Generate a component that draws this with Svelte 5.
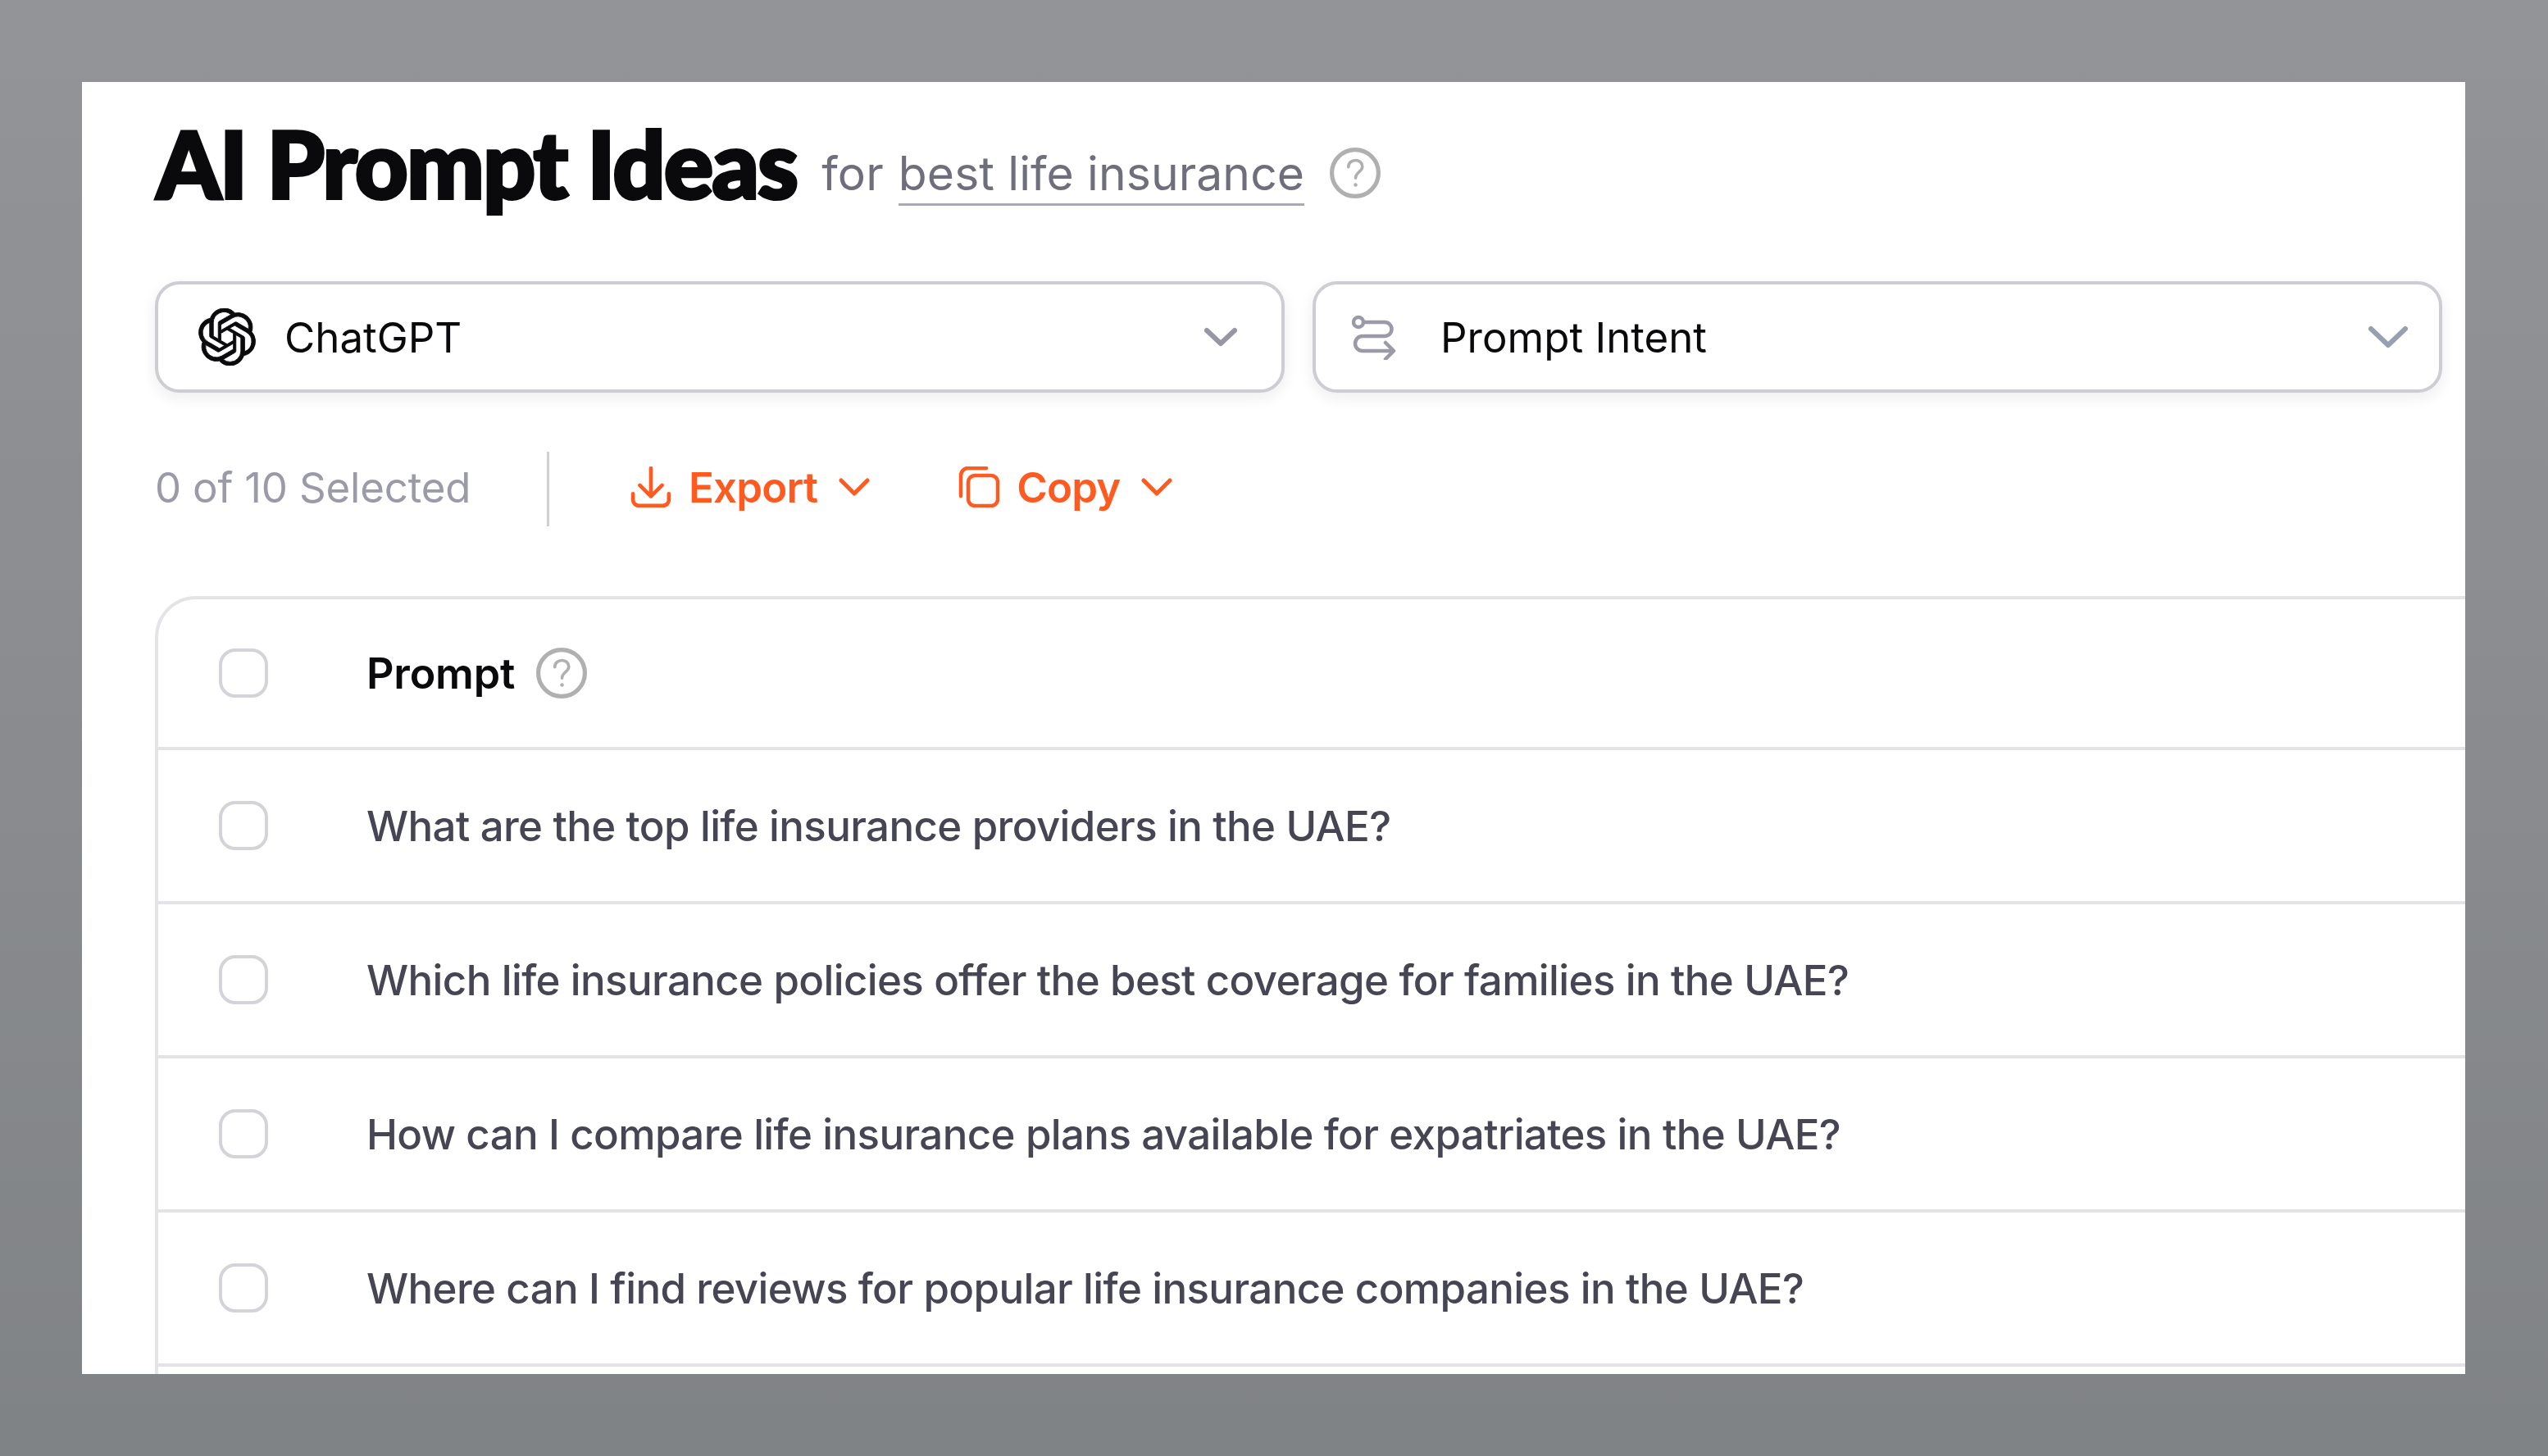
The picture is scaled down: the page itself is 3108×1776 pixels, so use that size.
<script>
    const prompts = [
        'What are the top life insurance providers in the UAE?',
        'Which life insurance policies offer the best coverage for families in the UAE?',
        'How can I compare life insurance plans available for expatriates in the UAE?',
        'Where can I find reviews for popular life insurance companies in the UAE?'
    ];
</script>

<div class="page">
    <main class="panel">
        <header class="title-row">
            <h1>AI Prompt Ideas</h1>
            <span class="for">for <span class="keyword">best life insurance</span></span>
            <svg class="help title-help" viewBox="0 0 60 60" fill="none">
                <circle cx="30" cy="30" r="27.500" />
                <path d="M22 23c0-5 4-8 8.500-8s8 3 8 7.500c0 6-8 6.500-8 13.500" />
                <circle class="dot" cx="30.500" cy="44" r="1.500" />
            </svg>
        </header>

        <div class="selects">
            <button class="select">
                <svg class="logo" viewBox="0 0 24 24" fill="#0b0b0e">
                    <path d="M22.2819 9.8211a5.9847 5.9847 0 0 0-.5157-4.9108 6.0462 6.0462 0 0 0-6.5098-2.9A6.0651 6.0651 0 0 0 4.9807 4.1818a5.9847 5.9847 0 0 0-3.9977 2.9 6.0462 6.0462 0 0 0 .7427 7.0966 5.98 5.98 0 0 0 .511 4.9107 6.051 6.051 0 0 0 6.5146 2.9001A5.9847 5.9847 0 0 0 13.2599 24a6.0557 6.0557 0 0 0 5.7718-4.2058 5.9894 5.9894 0 0 0 3.9977-2.9001 6.0557 6.0557 0 0 0-.7475-7.0729zm-9.022 12.6081a4.4755 4.4755 0 0 1-2.8764-1.0408l.1419-.0804 4.7783-2.7582a.7948.7948 0 0 0 .3927-.6813v-6.7369l2.02 1.1686a.071.071 0 0 1 .038.052v5.5826a4.504 4.504 0 0 1-4.4945 4.4944zm-9.6607-4.1254a4.4708 4.4708 0 0 1-.5346-3.0137l.142.0852 4.783 2.7582a.7712.7712 0 0 0 .7806 0l5.8428-3.3685v2.3324a.0804.0804 0 0 1-.0332.0615L9.74 19.9502a4.4992 4.4992 0 0 1-6.1408-1.6464zM2.3408 7.8956a4.485 4.485 0 0 1 2.3655-1.9728V11.6a.7664.7664 0 0 0 .3879.6765l5.8144 3.3543-2.0201 1.1685a.0757.0757 0 0 1-.071 0l-4.8303-2.7865A4.504 4.504 0 0 1 2.3408 7.872zm16.5963 3.8558L13.1038 8.364 15.1192 7.2a.0757.0757 0 0 1 .071 0l4.8303 2.7913a4.4944 4.4944 0 0 1-.6765 8.1042v-5.6772a.79.79 0 0 0-.407-.667zm2.0107-3.0231l-.142-.0852-4.7735-2.7818a.7759.7759 0 0 0-.7854 0L9.409 9.2297V6.8974a.0662.0662 0 0 1 .0284-.0615l4.8303-2.7866a4.4992 4.4992 0 0 1 6.6802 4.66zM8.3065 12.863l-2.02-1.1638a.0804.0804 0 0 1-.038-.0567V6.0742a4.4992 4.4992 0 0 1 7.3757-3.4537l-.142.0805L8.704 5.459a.7948.7948 0 0 0-.3927.6813zm1.0976-2.3654l2.602-1.4998 2.6069 1.4998v2.9994l-2.5974 1.4997-2.6067-1.4997Z" />
                </svg>
                <span class="select-label">ChatGPT</span>
                <svg class="chev" viewBox="0 0 40 24" fill="none">
                    <path d="M3 4l17 16L37 4" />
                </svg>
            </button>
            <button class="select intent">
                <svg class="route" viewBox="0 -2 54 56" fill="none">
                    <circle cx="8" cy="8" r="6" />
                    <path d="M14 8h26a8.500 8.500 0 0 1 0 17H13a9 9 0 0 0 0 18h37" />
                    <path d="M41 33l10 10-10 10" />
                </svg>
                <span class="select-label">Prompt Intent</span>
                <svg class="chev big" viewBox="0 0 48 28" fill="none">
                    <path d="M3 4l21 20L45 4" />
                </svg>
            </button>
        </div>

        <div class="toolbar">
            <span class="count">0 of 10 Selected</span>
            <span class="divider"></span>
            <button class="action">
                <svg class="action-icon" viewBox="0 0 48 48" fill="none">
                    <path d="M24 2v32M11 22l13 13 13-13M3 32v7a7 7 0 0 0 7 7h28a7 7 0 0 0 7-7v-7" />
                </svg>
                <span>Export</span>
                <svg class="action-chev" viewBox="0 0 38 22" fill="none">
                    <path d="M3 3l16 16L35 3" />
                </svg>
            </button>
            <button class="action">
                <svg class="action-icon" viewBox="0 0 50 50" fill="none">
                    <rect x="12" y="11" width="36" height="37" rx="8" />
                    <path d="M3 36V11a9 9 0 0 1 9-9h22" />
                </svg>
                <span>Copy</span>
                <svg class="action-chev" viewBox="0 0 38 22" fill="none">
                    <path d="M3 3l16 16L35 3" />
                </svg>
            </button>
        </div>

        <section class="table">
            <div class="row head">
                <span class="check"></span>
                <span class="prompt-head">Prompt</span>
                <svg class="help" viewBox="0 0 60 60" fill="none">
                    <circle cx="30" cy="30" r="27.500" />
                    <path d="M22 23c0-5 4-8 8.500-8s8 3 8 7.500c0 6-8 6.500-8 13.500" />
                    <circle class="dot" cx="30.500" cy="44" r="1.500" />
                </svg>
            </div>
            {#each prompts as prompt}
                <div class="row">
                    <span class="check"></span>
                    <span class="prompt">{prompt}</span>
                </div>
            {/each}
        </section>
    </main>
</div>

<style>
    :global(body) {
        margin: 0;
    }

    .page {
        box-sizing: border-box;
        height: 1776px;
        padding: 100px 101px 100px 100px;
        background: linear-gradient(180deg, #939498 0%, #808386 100%);
        font-family: Inter, "Liberation Sans", sans-serif;
    }

    .panel {
        height: 1576px;
        background: #fff;
        overflow: hidden;
        padding: 41px 0 0 89px;
        box-sizing: border-box;
    }

    .title-row {
        display: flex;
        align-items: center;
        height: 116px;
    }

    h1 {
        margin: 0 0 0 2px;
        font-family: Lato, Inter, sans-serif;
        font-size: 112px;
        font-weight: 900;
        letter-spacing: -1.500px;
        line-height: 116px;
        color: #0a0a0d;
        -webkit-text-stroke: 4px #0a0a0d;
    }

    .for {
        margin-left: 30px;
        font-size: 57px;
        letter-spacing: 0.100px;
        color: #6e6e7c;
        position: relative;
        top: 12px;
    }

    .keyword {
        margin-left: 2px;
        padding-bottom: 2px;
        border-bottom: 3px solid #a9a9b4;
    }

    .help {
        width: 62px;
        height: 62px;
        margin-left: 26px;
        flex: none;
    }

    .help circle {
        stroke: #b0b0b0;
        stroke-width: 5;
    }

    .help path {
        stroke: #b0b0b0;
        stroke-width: 3.500;
        stroke-linecap: round;
    }

    .help .dot {
        stroke-width: 1.500;
        fill: #b0b0b0;
    }

    .title-help {
        margin-left: 31px;
        position: relative;
        top: 12px;
    }

    .selects {
        display: grid;
        grid-template-columns: 1fr 1fr;
        gap: 34px;
        margin-top: 86px;
        padding-right: 28px;
    }

    .select {
        height: 136px;
        box-sizing: border-box;
        display: flex;
        align-items: center;
        padding: 0 54px 0 49px;
        background: #fff;
        border: 4px solid #cdcdd4;
        border-radius: 30px;
        box-shadow: 0 6px 18px rgba(20, 20, 40, 0.08);
        font: inherit;
        color: #0a0a0d;
    }

    .logo {
        width: 70px;
        height: 70px;
        flex: none;
    }

    .logo path {
        stroke: #0b0b0e;
        stroke-width: 0.300;
    }

    .select-label {
        margin-left: 35px;
        font-size: 51px;
        flex: 1;
        text-align: left;
    }

    .intent {
        padding: 0 38px 0 44px;
    }

    .intent .select-label {
        margin-left: 54px;
    }

    .route {
        width: 54px;
        height: 56px;
        flex: none;
    }

    .route circle,
    .route path {
        stroke: #9a9aa8;
        stroke-width: 4.500;
        stroke-linecap: round;
        stroke-linejoin: round;
    }

    .chev {
        width: 40px;
        height: 24px;
        flex: none;
    }

    .chev path {
        stroke: #9696a4;
        stroke-width: 6;
        stroke-linecap: round;
        stroke-linejoin: round;
    }

    .chev.big {
        width: 48px;
        height: 28px;
    }

    .chev.big path {
        stroke: #98a0b0;
    }

    .toolbar {
        display: flex;
        align-items: center;
        height: 92px;
        margin-top: 71px;
    }

    .count {
        font-size: 51px;
        letter-spacing: -0.200px;
        color: #9a9aa8;
        width: 478px;
        margin-bottom: 4px;
    }

    .divider {
        width: 3px;
        height: 91px;
        background: #cfcfd6;
        margin-right: 99px;
    }

    .action {
        display: flex;
        align-items: center;
        padding: 0;
        border: 0;
        background: none;
        font: inherit;
        font-size: 51px;
        font-weight: 600;
        letter-spacing: -0.800px;
        color: #ff5a1f;
        margin-right: 108px;
        margin-bottom: 4px;
    }

    .action-icon {
        width: 50px;
        height: 50px;
        margin-right: 21px;
        flex: none;
    }

    .action-icon path,
    .action-icon rect {
        stroke: #ff5a1f;
        stroke-width: 4.500;
        stroke-linecap: round;
        stroke-linejoin: round;
    }

    .action-chev {
        width: 38px;
        height: 22px;
        margin-left: 26px;
        flex: none;
    }

    .action-chev path {
        stroke: #ff5a1f;
        stroke-width: 5;
        stroke-linecap: round;
        stroke-linejoin: round;
    }

    .table {
        margin-top: 85px;
        margin-right: -100px;
        padding-bottom: 60px;
        border: 4px solid #e3e3e8;
        border-right: 0;
        border-top-left-radius: 50px;
    }

    .row {
        display: flex;
        align-items: center;
        height: 184px;
        padding-left: 74px;
        border-bottom: 4px solid #e3e3e8;
    }

    .row.head {
        height: 180px;
    }

    .check {
        width: 60px;
        height: 60px;
        box-sizing: border-box;
        border: 4px solid #d3d3d9;
        border-radius: 20px;
        margin-right: 120px;
        flex: none;
    }

    .prompt-head {
        font-size: 52px;
        font-weight: 600;
        letter-spacing: -0.200px;
        color: #0a0a0d;
    }

    .prompt {
        font-size: 51px;
        font-weight: 450;
        letter-spacing: -0.620px;
        color: #454553;
    }
</style>
